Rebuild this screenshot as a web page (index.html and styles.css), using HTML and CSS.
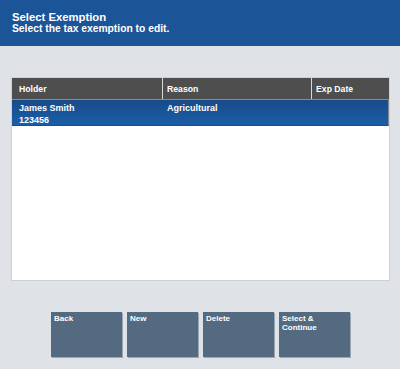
FILE: index.html
```html
<!DOCTYPE html>
<html>
<head>
<meta charset="utf-8">
<link rel="stylesheet" href="styles.css">
</head>
<body>
<div class="screen">
  <header class="topbar">
    <div class="title">Select Exemption</div>
    <div class="subtitle">Select the tax exemption to edit.</div>
  </header>
  <main class="content">
    <div class="grid">
      <div class="grid-head">
        <div class="cell c1">Holder</div>
        <div class="cell c2">Reason</div>
        <div class="cell c3">Exp Date</div>
      </div>
      <div class="grid-row selected">
        <div class="cell c1">James Smith<br>123456</div>
        <div class="cell c2">Agricultural</div>
        <div class="cell c3"></div>
      </div>
    </div>
    <div class="buttons">
      <button class="btn">Back</button>
      <button class="btn">New</button>
      <button class="btn">Delete</button>
      <button class="btn">Select &amp;<br>Continue</button>
    </div>
  </main>
</div>
</body>
</html>
```
FILE: styles.css
```css
html, body {
  margin: 0;
  padding: 0;
  background: #dfe2e6;
  font-family: "Liberation Sans", Arial, sans-serif;
}
.screen {
  width: 400px;
  height: 369px;
  display: flex;
  flex-direction: column;
}
.topbar {
  height: 46px;
  box-sizing: border-box;
  background: #1b5597;
  color: #fff;
  font-weight: bold;
  padding: 12px 0 0 12px;
}
.title {
  font-size: 11.3px;
  line-height: 11px;
}
.subtitle {
  font-size: 10.3px;
  line-height: 11px;
}
.content {
  flex: 1;
  display: flex;
  flex-direction: column;
}
.grid {
  margin: 31px 10px 0 11px;
  height: 204px;
  box-sizing: border-box;
  border: 1px solid #cdd1d6;
  background: #fff;
}
.grid-head, .grid-row {
  display: grid;
  grid-template-columns: 151px 149px 1fr;
}
.grid-head {
  height: 22px;
  background: #4e4e4e;
  color: #fff;
  font-weight: bold;
  font-size: 8.7px;
  border-bottom: 1px solid #8a8a8a;
  box-sizing: border-box;
}
.grid-head .cell {
  display: flex;
  align-items: center;
}
.grid-head .c1, .grid-head .c2 {
  border-right: 1px solid #d8d8d8;
}
.cell {
  padding-left: 4px;
}
.cell.c1 {
  padding-left: 7px;
}
.grid-row {
  height: 26px;
  box-sizing: border-box;
  color: #fff;
  font-weight: bold;
  font-size: 9px;
  line-height: 11.5px;
}
.grid-row .cell {
  padding-top: 3px;
}
.selected {
  background: linear-gradient(#184b89, #1b5ea7);
  border-right: 1px solid #7d8a97;
  border-bottom: 1px solid #2d4a6d;
}
.buttons {
  display: flex;
  justify-content: center;
  gap: 5px;
  margin-top: 31px;
  padding-left: 1px;
}
.btn {
  width: 71px;
  height: 45px;
  background: #546a80;
  border: none;
  box-shadow: 1px 1px 0 #9aa6b2;
  color: #fff;
  font-family: "Liberation Sans", Arial, sans-serif;
  font-weight: bold;
  font-size: 8px;
  line-height: 9px;
  text-align: left;
  padding: 2px 3px;
  display: flex;
  align-items: flex-start;
  box-sizing: border-box;
}
```
